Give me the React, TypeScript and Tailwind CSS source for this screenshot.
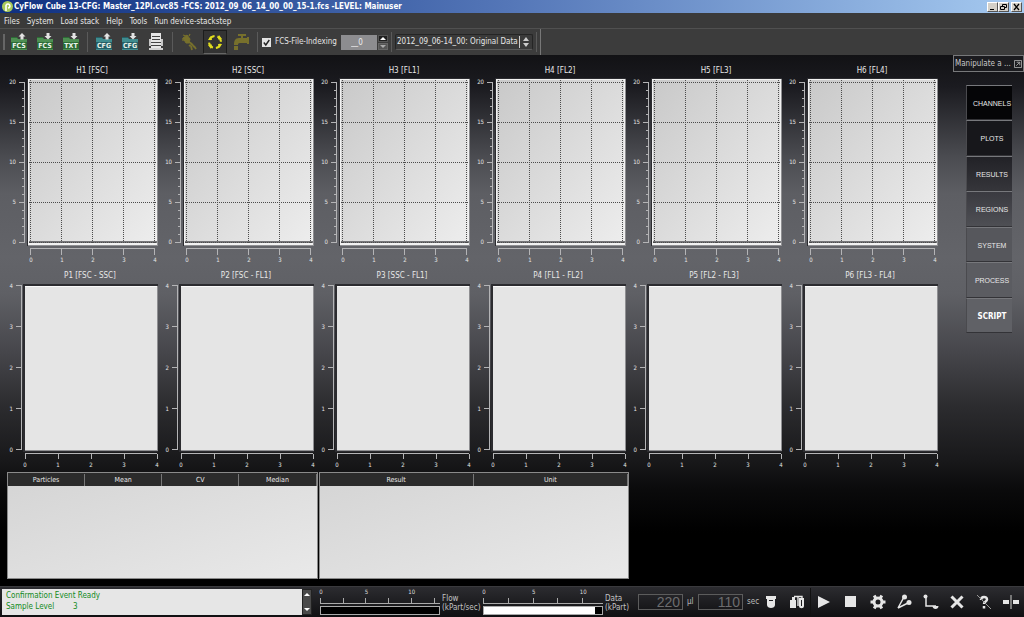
import { ReactNode } from "react";

const UI_FONT = "font-['DejaVu_Sans_Condensed','DejaVu_Sans',sans-serif]";

const MENUS = ["Files", "System", "Load stack", "Help", "Tools", "Run device-stackstep"];
const HISTOGRAMS = ["H1 [FSC]", "H2 [SSC]", "H3 [FL1]", "H4 [FL2]", "H5 [FL3]", "H6 [FL4]"];
const DOT_PLOTS = ["P1 [FSC - SSC]", "P2 [FSC - FL1]", "P3 [SSC - FL1]", "P4 [FL1 - FL2]", "P5 [FL2 - FL3]", "P6 [FL3 - FL4]"];
const TABS = [
  { label: "CHANNELS", style: "text-[7px] font-['Liberation_Sans',sans-serif] bg-[#050507]" },
  { label: "PLOTS", style: "text-[7px] font-['Liberation_Sans',sans-serif] bg-[#17171b]" },
  { label: "RESULTS", style: "text-[7px] font-['Liberation_Sans',sans-serif] bg-linear-to-b from-[#222227] to-[#35353a]" },
  { label: "REGIONS", style: "text-[7px] font-['Liberation_Sans',sans-serif] bg-linear-to-b from-[#3a3a40] to-[#4e4f54]" },
  { label: "SYSTEM", style: "text-[7px] font-['Liberation_Sans',sans-serif] bg-[#56575c]" },
  { label: "PROCESS", style: "text-[7px] font-['Liberation_Sans',sans-serif] bg-[#5b5c61]" },
  { label: "SCRIPT", style: "text-[8px] font-bold text-white bg-[#606166]" },
];

function ToolButton({ label, active, children }: { label: string; active?: boolean; children: ReactNode }) {
  return (
    <button
      aria-label={label}
      className={active
        ? "w-6 h-6 mx-px flex items-center justify-center border border-[#1c1c1c] border-b-[#666] bg-[#333]"
        : "w-[26px] h-6 flex items-center justify-center"}
    >
      {children}
    </button>
  );
}

function Divider() {
  return <span className="w-px h-5 mx-[3px] bg-[#5a5a5a] shrink-0" />;
}

function FolderIcon({ text, down, color, dark }: { text: string; down?: boolean; color: string; dark: string }) {
  return (
    <svg width="18" height="18" viewBox="0 0 18 18">
      <path d="M1 4h6l1 2h9v11H1z" fill={dark} />
      <path d="M1 5h6l1 1h9v3H1z" fill={color} />
      <path d="M1 16h16v1H1z" fill={color} />
      {down
        ? <path d="M10.500 0h3v3h2l-3.500 3.500L8.500 3h2z" fill="#e4e4e4" />
        : <path d="M12 0l3.500 3.500h-2v3h-3v-3h-2z" fill="#e4e4e4" />}
      <text x="9" y="15" textAnchor="middle" fontSize="7" fontWeight="bold" fill="#e9f3ea">{text}</text>
    </svg>
  );
}

function Histogram({ title }: { title: string }) {
  return (
    <section>
      <h2 className="h-[14px] pl-3 text-center text-[8px] leading-[15px]">{title}</h2>
      <svg viewBox="0 0 156 191" className="block w-full h-auto" fontSize="6" fill="#e6e6e6">
        <rect x="19" y="1" width="131" height="168" fill="#2c2c30" />
        <rect x="20" y="2" width="130" height="167" fill="#8f8f92" />
        <rect x="20" y="2" width="129" height="166" fill="#f2f2f2" />
        <rect x="21" y="3" width="127" height="162" fill="url(#paper)" />
        <rect x="21" y="164" width="128" height="2" fill="#77777a" />
        <g stroke="#4c4c4c" strokeDasharray="1 1" shapeRendering="crispEdges">
          {[0, 1, 2, 3, 4].map(i => <path key={i} d={`M${22.5 + i * 31} 3V166M21 ${5.5 + i * 40}H149`} />)}
        </g>
        <g stroke="#b4b4b6" shapeRendering="crispEdges">
          <path d="M16.500 5V166M22 171.500H147" />
          {Array.from({ length: 21 }, (_, i) => (
            <path key={i} d={`M${i % 5 ? 14 : 11} ${5.5 + i * 8}H16`} />
          ))}
          {[0, 1, 2, 3, 4].map(i => <path key={i} d={`M${22.5 + i * 31} 172V178`} />)}
        </g>
        {[20, 15, 10, 5, 0].map((n, i) => <text key={n} x="8" y={7 + i * 40} textAnchor="end">{n}</text>)}
        {[0, 1, 2, 3, 4].map(n => <text key={n} x={23 + n * 31} y="185" textAnchor="middle">{n}</text>)}
      </svg>
    </section>
  );
}

function DotPlot({ title }: { title: string }) {
  return (
    <section>
      <h2 className="h-[14px] pl-2 text-center text-[8px] leading-[15px]">{title}</h2>
      <svg viewBox="0 0 156 190" className="block w-full h-auto" fontSize="6" fill="#e6e6e6">
        <rect x="15" y="2" width="135" height="168" fill="#2c2c30" />
        <rect x="17" y="4" width="133" height="165" fill="#8f8f92" />
        <rect x="17" y="4" width="132" height="164" fill="#e5e5e5" />
        <path d="M17 4.500H149" stroke="#fafafa" />
        <g stroke="#b4b4b6" shapeRendering="crispEdges">
          <path d="M13.500 3V168M17 171.500H149" />
          {[0, 1, 2, 3, 4].map(i => <path key={i} d={`M8 ${3.5 + i * 41}H13M${17.5 + i * 33} 172V177`} />)}
        </g>
        {[4, 3, 2, 1, 0].map((n, i) => <text key={n} x="5" y={6 + i * 41} textAnchor="end">{n}</text>)}
        {[0, 1, 2, 3, 4].map(n => <text key={n} x={17 + n * 33} y="185" textAnchor="middle">{n}</text>)}
      </svg>
    </section>
  );
}

function ResultTable({ columns }: { columns: string[] }) {
  return (
    <table className="w-full table-fixed border border-[#8a8a8a] border-separate border-spacing-0 bg-linear-to-br from-[#d4d4d4] to-[#e9e9e9]">
      <thead>
        <tr className="h-[13px]">
          {columns.map(c => (
            <th key={c} className="p-0 bg-[#2b2b2b] text-[7px] leading-3 font-normal">
              <span className="block border-r border-[#777]">{c}</span>
            </th>
          ))}
        </tr>
      </thead>
      <tbody>
        <tr className="h-[92px]">
          {columns.map(c => <td key={c} />)}
        </tr>
      </tbody>
    </table>
  );
}

function Gauge({ name, unit, step, fill }: { name: string; unit: string; step: number; fill: number }) {
  return (
    <div className="flex">
      <svg width="122" height="28" viewBox="0 0 122 28" fontSize="6" fill="#ddd" className="overflow-visible">
        {[0, 5, 10].map((n, i) => <text key={n} x={1 + i * step * 2} y="6" textAnchor="middle">{n}</text>)}
        <g stroke="#aaa" shapeRendering="crispEdges">
          <path d="M0 15.500H120" />
          {[0, 1, 2, 3, 4, 5].filter(i => i * step < 120).map(i => (
            <path key={i} d={`M${Math.round(i * step) + 0.5} 10V15`} />
          ))}
        </g>
        <rect x="0.500" y="18.500" width="119" height="8" fill="#000" stroke="#aaa" />
        <rect x="1" y="19" width={fill} height="7" fill="#fff" />
      </svg>
      <p className="pt-[6px] text-[8px] leading-[9px] text-[#c4c4c4]">{name}<br />{unit}</p>
    </div>
  );
}

function Lcd({ value, unit }: { value: string; unit: string }) {
  return (
    <div className="flex items-center">
      <output className="w-[45px] h-4 pr-0.5 border border-[#5c5c5c] text-right font-['Liberation_Sans',sans-serif] text-[14px] leading-[14px] text-[#6c6c6e]">
        {value}
      </output>
      <span className="w-[15px] pl-1 text-[8px] text-[#bbb]">{unit}</span>
    </div>
  );
}

function DeviceButton({ label, children }: { label: string; children: ReactNode }) {
  return (
    <button aria-label={label} className="flex-1 flex items-center justify-center">
      <svg width="16" height="16" viewBox="0 0 16 16" fill="#e6e6e6" stroke="none">{children}</svg>
    </button>
  );
}

function TitleBar() {
  return (
    <header className="h-[13px] flex items-center bg-linear-to-r from-[#0f2f80] via-[#5577b8] to-[#a6caf0] px-0.5">
      <svg width="11" height="11" viewBox="0 0 11 11">
        <circle cx="5.500" cy="5.500" r="5.500" fill="#a9c95a" />
        <path d="M4 10V4.500a2 2 0 1 1 2 2.500" fill="none" stroke="#fff" strokeWidth="1.600" />
      </svg>
      <h1 className="flex-1 pl-px text-[8px] leading-3 font-bold text-white whitespace-nowrap">
        CyFlow Cube 13-CFG: Master_12Pl.cvc85 -FCS: 2012_09_06_14_00_00_15-1.fcs -LEVEL: Mainuser
      </h1>
      <div className="flex text-black">
        <button aria-label="Minimize" className="w-[11px] h-[10px] bg-[#d4d0c8] border border-white border-r-[#555] border-b-[#555]">
          <svg width="9" height="8" viewBox="0 0 9 8"><path d="M2 6h4v1H2z" /></svg>
        </button>
        <button aria-label="Restore" className="w-[11px] h-[10px] bg-[#d4d0c8] border border-white border-r-[#555] border-b-[#555]">
          <svg width="9" height="8" viewBox="0 0 9 8" fill="none" stroke="#000"><path d="M3.500 3V1.500h4v3H6M1.500 3.500h4v3h-4z" /></svg>
        </button>
        <button aria-label="Close" className="w-[11px] h-[10px] ml-0.5 bg-[#d4d0c8] border border-white border-r-[#555] border-b-[#555]">
          <svg width="9" height="8" viewBox="0 0 9 8" fill="none" stroke="#000" strokeWidth="1.300"><path d="M2 1l5 6M7 1L2 7" /></svg>
        </button>
      </div>
    </header>
  );
}

function Toolbar() {
  return (
    <div className="h-[27px] flex items-center border-t border-[#505050] bg-[#3c3c3c]">
      <span className="w-[2px] h-4 ml-[3px] mr-px bg-[#666]" />
      <ToolButton label="Export FCS"><FolderIcon text="FCS" color="#4d8f52" dark="#2c6b35" /></ToolButton>
      <ToolButton label="Import FCS"><FolderIcon text="FCS" down color="#4d8f52" dark="#2c6b35" /></ToolButton>
      <ToolButton label="Save text"><FolderIcon text="TXT" down color="#4d8f52" dark="#2c6b35" /></ToolButton>
      <Divider />
      <ToolButton label="Load configuration"><FolderIcon text="CFG" color="#3f8c8f" dark="#245f66" /></ToolButton>
      <ToolButton label="Save configuration"><FolderIcon text="CFG" down color="#3f8c8f" dark="#245f66" /></ToolButton>
      <ToolButton label="Print">
        <svg width="16" height="18" viewBox="0 0 16 18">
          <path d="M3 0h10v15H3z" fill="#e6e6e6" />
          <path d="M1 6h2v7H1zM13 6h2v7h-2z" fill="#c8c8c8" />
          <path d="M4 3.500h8M4 6.500h8M3 9.500h10M3 12.500h10" stroke="#444" />
          <path d="M1 15h14v2H1z" fill="#d0d0d0" />
        </svg>
      </ToolButton>
      <Divider />
      <ToolButton label="Prime">
        <svg width="18" height="18" viewBox="0 0 18 18" fill="none" stroke="#77702c">
          <path d="M3 5l4-3 3 4-1 4-3 0z" fill="#77702c" />
          <path d="M3 2l3 1M9 3l1-2M3 5l0 3" strokeWidth="1.300" />
          <path d="M9 9l3 2M12 11l-3 2M12 11l2 3M11 13l1 4M14 13l2 3" strokeWidth="1.800" />
        </svg>
      </ToolButton>
      <ToolButton label="Run cycle" active>
        <svg width="18" height="18" viewBox="0 0 18 18" fill="none" stroke="#e0dc1e" strokeWidth="2">
          <circle cx="9" cy="9" r="6" strokeDasharray="6.400 3" transform="rotate(18 9 9)" />
          <path d="M13 2l3 4-4 .5zM16 11l-3 4-1-4zM5 16l-3-4 4-.5zM2 7l3-4 1 4z" fill="#e0dc1e" stroke="none" />
        </svg>
      </ToolButton>
      <ToolButton label="Clean">
        <svg width="18" height="18" viewBox="0 0 18 18" fill="#77702c">
          <path d="M6 1h8v2h-3v2h4v5H8c-2 0-2 1-2 2H2c0-4 1-7 5-7h2V3H6z" />
          <path d="M2 13h4v4H2zM15 4h2v7h-2z" />
        </svg>
      </ToolButton>
      <Divider />
      <label className="flex items-center ml-px text-[8px] text-[#e4e4e4] whitespace-nowrap">
        <input type="checkbox" defaultChecked className="peer sr-only" />
        <svg width="9" height="9" viewBox="0 0 9 9" className="mr-1">
          <path d="M0 0h9v9H0z" fill="#e4e4e4" />
          <path d="M1.800 4.500l2 2.500 3.500-5" fill="none" stroke="#222" strokeWidth="1.400" />
        </svg>
        <span className="w-[66px]">FCS-File-Indexing</span>
      </label>
      <input aria-label="File index" defaultValue="__0" className="w-9 h-[15px] pl-2.5 bg-[#8d8d90] text-[8px] text-[#eee]" />
      <div className="w-[10px] h-[15px] ml-px flex flex-col gap-px">
        <button aria-label="Increase" className="flex-1 flex items-center justify-center bg-[#1f1f1f] border border-[#555]">
          <svg width="6" height="3" viewBox="0 0 6 3"><path d="M0 3l3-3 3 3z" fill="#fff" /></svg>
        </button>
        <button aria-label="Decrease" className="flex-1 flex items-center justify-center bg-[#555] border border-[#666]">
          <svg width="6" height="3" viewBox="0 0 6 3"><path d="M0 0l3 3 3-3z" fill="#aaa" /></svg>
        </button>
      </div>
      <Divider />
      <div className="relative">
        <select aria-label="Data set" className="block appearance-none w-[138px] h-4 pl-px border border-[#252525] border-b-[#5a5a5a] rounded-[2px] bg-[#3a3a3a] text-[8px] text-[#e6e6e6]">
          <option>2012_09_06-14_00: Original Data</option>
        </select>
        <svg width="14" height="12" viewBox="0 0 14 12" className="absolute right-0 top-0.5 pointer-events-none" fill="#ccc">
          <path d="M0 0h1v12H0zM4 5l3-4 3 4zM4 7l3 4 3-4z" />
        </svg>
      </div>
      <Divider />
      <span className="w-px h-full bg-[#777]" />
    </div>
  );
}

export default function App() {
  return (
    <div className={`min-h-screen flex flex-col bg-black text-[#e8e8e8] ${UI_FONT}`}>
      <svg width="0" height="0" className="absolute" aria-hidden="true">
        <linearGradient id="paper" x1="0" y1="0" x2="1" y2="1">
          <stop offset="0" stopColor="#c9c9c9" />
          <stop offset="1" stopColor="#ededed" />
        </linearGradient>
      </svg>
      <TitleBar />
      <nav className="h-[15px] flex items-center gap-[7px] pl-1 bg-[#3a3a3a] text-[8px] leading-[15px]">
        {MENUS.map(m => <button key={m} className="pt-px whitespace-nowrap">{m}</button>)}
      </nav>
      <Toolbar />

      <div className="flex-1 flex bg-[linear-gradient(to_bottom,#121215_0%,#1b1b20_6%,#4a4b50_19%,#5d5e63_26%,#636469_38%,#5f6065_45%,#46464b_56%,#2c2c2f_66%,#19191b_76%,#0a0a0b_82%,#000_90%)]">
        <main className="flex-1 min-w-0 pt-2 pl-2 pr-[9px]">
          <div className="grid grid-cols-6">
            {HISTOGRAMS.map(t => <Histogram key={t} title={t} />)}
            {DOT_PLOTS.map(t => <DotPlot key={t} title={t} />)}
            <div className="col-span-4 grid grid-cols-2 gap-px -ml-px pr-[3px]">
              <ResultTable columns={["Particles", "Mean", "CV", "Median"]} />
              <ResultTable columns={["Result", "Unit"]} />
            </div>
          </div>
        </main>
        <aside className="w-[71px] shrink-0">
          <div className="h-[17px] flex items-center justify-between border border-[#77787a] bg-[#1b1b1f] pl-px pr-px text-[8px] text-[#c8c8c8]">
            <span className="whitespace-nowrap">Manipulate a ...</span>
            <button aria-label="Detach panel">
              <svg width="8" height="8" viewBox="0 0 9 9" fill="none" stroke="#aaa">
                <path d="M.5.500h8v8h-8zM3 2.500h3.500V6M6.500 2.500l-4 4" />
              </svg>
            </button>
          </div>
          <div className="h-[248px] mt-[13px] mr-3 ml-[13px] grid auto-rows-fr">
            {TABS.map(t => (
              <button key={t.label} className={`border-t border-l border-t-[#77787c] border-l-[#4a4a4e] border-b border-b-[#333337] pt-[3px] pl-[5px] whitespace-nowrap ${t.style}`}>
                {t.label}
              </button>
            ))}
          </div>
        </aside>
      </div>

      <footer className="h-[31px] flex items-center border-t border-[#3a3a3d] bg-linear-to-b from-[#2c2c30] to-[#101012]">
        <textarea
          readOnly
          aria-label="Device messages"
          defaultValue={"Confirmation Event Ready\nSample Level\t3"}
          className="flex-1 min-w-0 h-[26px] ml-0.5 pl-1 pt-px resize-none overflow-hidden bg-[#e6e6e6] text-[8px] leading-[11px] text-[#128a1c] [tab-size:67px]"
        />
        <div className="w-[10px] h-[26px] flex flex-col justify-between bg-[#4a4a4a] border border-[#222]">
          <button aria-label="Scroll up"><svg width="8" height="8" viewBox="0 0 8 8"><path d="M1 6l3-3 3 3z" fill="#fff" /></svg></button>
          <button aria-label="Scroll down"><svg width="8" height="8" viewBox="0 0 8 8"><path d="M1 2l3 3 3-3z" fill="#fff" /></svg></button>
        </div>
        <div className="flex pl-2">
          <div className="w-[163px]"><Gauge name="Flow" unit="(kPart/sec)" step={22.7} fill={0} /></div>
          <div className="w-[155px]"><Gauge name="Data" unit="(kPart)" step={24.8} fill={111} /></div>
        </div>
        <div className="flex">
          <Lcd value="220" unit="µl" />
          <Lcd value="110" unit="sec" />
        </div>
        <div className="w-[52px] flex">
          <DeviceButton label="Sample tube">
            <path d="M3 2h10v3h-1v6c0 4-8 4-8 0V5H3zM6 6v1h4V6z" fillRule="evenodd" />
          </DeviceButton>
          <DeviceButton label="Tubes">
            <path d="M1 6h6v8H1zM3 3h3v3H3z" />
            <path d="M5 2.500h4V12M8 2.500h5V5" fill="none" stroke="#e6e6e6" strokeWidth="1.400" />
            <path d="M10 4h5v8c0 3-5 3-5 0zM12 6v6h1V6z" fillRule="evenodd" />
          </DeviceButton>
        </div>
        <div className="w-[214px] h-7 flex border-l border-[#111]">
          <DeviceButton label="Start"><path d="M2 2l12 6-12 6z" /></DeviceButton>
          <DeviceButton label="Stop"><path d="M2 2h11v11H2z" /></DeviceButton>
          <DeviceButton label="Settings">
            <circle cx="8" cy="8" r="4" fill="none" stroke="#e6e6e6" strokeWidth="3" />
            <path d="M.5 8H4M12 8h3.500M4.200 1.500l1.600 2.700M11.800 1.500l-1.600 2.700M4.200 14.500l1.600-2.700M11.800 14.500l-1.600-2.700" stroke="#e6e6e6" strokeWidth="3" />
          </DeviceButton>
          <DeviceButton label="Gate">
            <path d="M2 14L8 3M2 14l10-5" fill="none" stroke="#e6e6e6" strokeWidth="1.500" />
            <circle cx="8.500" cy="3" r="2.500" />
            <circle cx="13" cy="8.500" r="2.500" />
          </DeviceButton>
          <DeviceButton label="Axes">
            <path d="M3 2v10H13" fill="none" stroke="#e6e6e6" strokeWidth="1.500" />
            <circle cx="2.500" cy="2.500" r="2" />
            <path d="M9.500 12h6c0 4-6 4-6 0z" />
          </DeviceButton>
          <DeviceButton label="Delete"><path d="M2.500 2.500l11 11M13.500 2.500l-11 11" stroke="#e6e6e6" strokeWidth="3" /></DeviceButton>
          <DeviceButton label="Help">
            <path d="M5 6c0-4 6-4 6-.5 0 2-3 2-3 4.500M8 12v2.500" fill="none" stroke="#e6e6e6" strokeWidth="2.500" />
            <path d="M1 1l14 14" stroke="#999" strokeWidth="1" />
          </DeviceButton>
          <DeviceButton label="Split view">
            <path d="M0 6h6v4H0zM10 6h6v4h-6z" />
            <path d="M7 1h2v14H7z" fill="#777" />
          </DeviceButton>
        </div>
      </footer>
    </div>
  );
}
